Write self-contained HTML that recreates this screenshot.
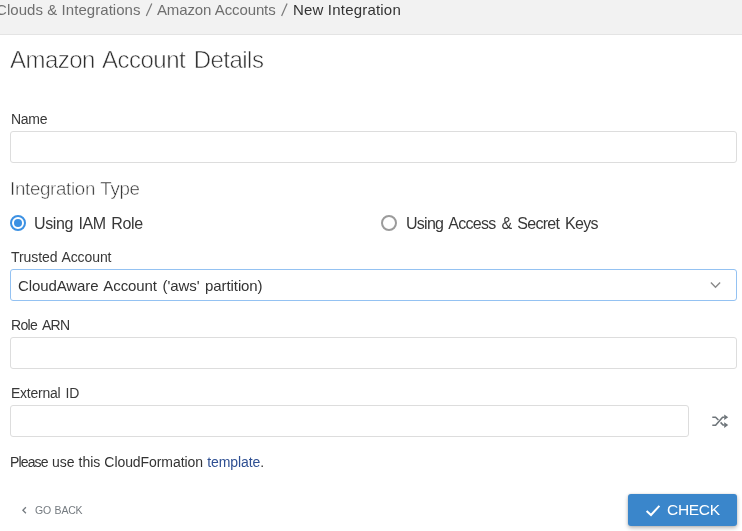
<!DOCTYPE html>
<html>
<head>
<meta charset="utf-8">
<title>New Integration</title>
<style>
  html, body { margin: 0; padding: 0; }
  body {
    width: 742px; height: 531px; overflow: hidden; position: relative;
    background: #ffffff;
    font-family: "Liberation Sans", sans-serif;
    color: #333333;
  }
  .abs { position: absolute; }
  .w { will-change: transform; position: absolute; white-space: nowrap; font-family: "Liberation Sans", sans-serif; }
  .header {
    position: absolute; left: 0; top: 0; width: 742px; height: 34px;
    background: #f2f2f2; border-bottom: 1px solid #e4e4e4;
  }
  .input {
    position: absolute; box-sizing: border-box; left: 10px; width: 727px; height: 32px;
    border: 1px solid #dddddd; border-radius: 3px; background: #ffffff;
  }
  .select { border-color: #94c2f2; }
  .radio {
    position: absolute; box-sizing: border-box; width: 16px; height: 16px; border-radius: 50%;
    border: 2px solid #9b9b9b; background: #ffffff;
  }
  .radio.on { border-color: #3c91e3; }
  .radio.on::after {
    content: ""; position: absolute; left: 2px; top: 2px; width: 8px; height: 8px;
    border-radius: 50%; background: #3c91e3;
  }
  .btn {
    position: absolute; left: 628px; top: 494px; width: 109px; height: 32px; box-sizing: border-box;
    background: #3a86cb; border-radius: 3px;
    box-shadow: 0 2px 4px rgba(0,0,0,0.28), 0 0 2px rgba(0,0,0,0.12);
  }
</style>
</head>
<body>
  <div class="header"></div>
  <!-- breadcrumb separators -->
  <svg class="abs" style="left:140px; top:0px" width="160" height="22" viewBox="0 0 160 22">
    <g stroke="#7a7a7a" stroke-width="1.2" fill="none">
      <path d="M6.3 16 L11.8 3.5"/>
      <path d="M141.6 16 L147.1 3.5"/>
    </g>
  </svg>

  <div class="input" style="top:131px"></div>

  <div class="radio on" style="left:10px; top:215px"></div>
  <div class="radio" style="left:381px; top:215px"></div>

  <div class="input select" style="top:269px"></div>
  <svg class="abs" style="left:705px; top:277px" width="20" height="16" viewBox="0 0 20 16"><path d="M5.9 5.4 L10.5 10.2 L15.1 5.4" fill="none" stroke="#8a8a8a" stroke-width="1.4"/></svg>

  <div class="input" style="top:337px"></div>
  <div class="input" style="top:405px; width:679px"></div>

  <!-- shuffle icon -->
  <svg class="abs" style="left:700px; top:405px" width="40" height="32" viewBox="0 0 40 32">
    <g fill="none" stroke="#6e757a" stroke-width="1.6" stroke-linejoin="round">
      <path d="M12.3 12.2 H15.6 L18.4 15.0"/>
      <path d="M12.3 20.2 H15.6 L22.6 12.2 H24.4"/>
      <path d="M20.6 17.4 L23.0 20.0 H24.4"/>
    </g>
    <path d="M24.2 9.4 L28.2 12.2 L24.2 15.0 Z M24.2 17.3 L28.2 20.0 L24.2 22.9 Z" fill="#6e757a"/>
  </svg>

  <!-- go back chevron -->
  <svg class="abs" style="left:18px; top:502px" width="14" height="16" viewBox="0 0 14 16"><path d="M7.9 5.2 L4.9 8.2 L7.9 11.2" fill="none" stroke="#757b80" stroke-width="1.3"/></svg>

  <div class="btn"></div>
  <svg class="abs" style="left:640px; top:498px" width="26" height="24" viewBox="0 0 26 24"><path d="M6.6 12.9 L11.0 17.0 L19.4 7.8" fill="none" stroke="#ffffff" stroke-width="2"/></svg>

<div class="w" style="left:-3.89px;top:-0.2px;font-size:15px;line-height:20px;color:#6f6f6f;letter-spacing:0.045px;word-spacing:0.091px;">Clouds &amp; Integrations</div>
<div class="w" style="left:156.96px;top:-0.2px;font-size:15px;line-height:20px;color:#6f6f6f;letter-spacing:-0.131px;word-spacing:0.411px;">Amazon Accounts</div>
<div class="w" style="left:292.57px;top:-0.2px;font-size:15px;line-height:20px;color:#333333;letter-spacing:0.201px;word-spacing:-0.115px;">New Integration</div>
<div class="w" style="left:10.0px;top:44.68px;font-size:24px;line-height:30px;color:#2e2e2e;letter-spacing:-0.518px;word-spacing:2.318px;-webkit-text-stroke:0.6px #ffffff;">Amazon Account Details</div>
<div class="w" style="left:10.6px;top:109.15px;font-size:14px;line-height:20px;color:#383838;letter-spacing:-0.286px;">Name</div>
<div class="w" style="left:9.81px;top:178.52px;font-size:18.7px;line-height:20px;color:#333333;letter-spacing:-0.298px;word-spacing:0.715px;-webkit-text-stroke:0.5px #ffffff;">Integration Type</div>
<div class="w" style="left:34.12px;top:214.46px;font-size:16px;line-height:20px;color:#383838;letter-spacing:-0.386px;word-spacing:1.45px;">Using IAM Role</div>
<div class="w" style="left:405.83px;top:214.46px;font-size:16px;line-height:20px;color:#383838;letter-spacing:-0.727px;word-spacing:2.189px;">Using Access &amp; Secret Keys</div>
<div class="w" style="left:10.66px;top:247.15px;font-size:14px;line-height:20px;color:#383838;letter-spacing:-0.082px;word-spacing:0.983px;">Trusted Account</div>
<div class="w" style="left:18.06px;top:275.8px;font-size:15px;line-height:20px;color:#333333;letter-spacing:-0.092px;word-spacing:1.588px;">CloudAware Account ('aws' partition)</div>
<div class="w" style="left:11.06px;top:315.15px;font-size:14px;line-height:20px;color:#383838;letter-spacing:-0.642px;word-spacing:2.226px;">Role ARN</div>
<div class="w" style="left:10.63px;top:383.15px;font-size:14px;line-height:20px;color:#383838;letter-spacing:-0.255px;word-spacing:1.566px;">External ID</div>
<div class="w" style="left:9.5px;top:452.15px;font-size:14px;line-height:20px;color:#333333;letter-spacing:-0.854px;">Please</div>
<div class="w" style="left:52.05px;top:452.15px;font-size:14px;line-height:20px;color:#333333;letter-spacing:-0.074px;word-spacing:0.448px;">use this CloudFormation <span style="color:#2e4f92">template</span>.</div>
<div class="w" style="left:34.73px;top:500.36px;font-size:10.5px;line-height:20px;color:#757b80;letter-spacing:-0.235px;word-spacing:1.072px;">GO BACK</div>
<div class="w" style="left:667.3px;top:499.63px;font-size:15.5px;line-height:20px;color:#ffffff;letter-spacing:-0.29px;">CHECK</div>
</body>
</html>
